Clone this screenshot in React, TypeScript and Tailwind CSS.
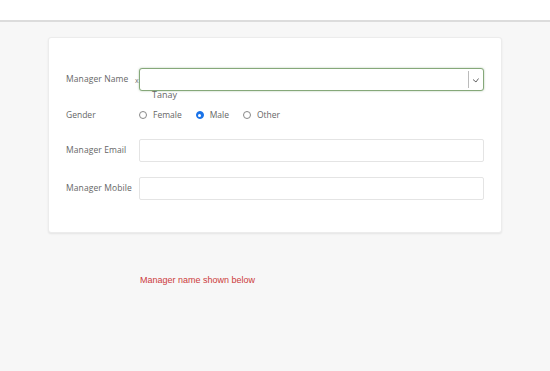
import { useState } from 'react'

const labelFont = { fontFamily: '"Open Sans", "Noto Sans", sans-serif' }

export default function App() {
  const [gender, setGender] = useState('male')

  return (
    <div className="min-h-[371px] w-[550px] bg-[#f7f7f7]" style={labelFont}>
      <header className="h-[22px] bg-white border-b-2 border-[#dcdcdc]" />

      <div className="pl-[48px] pt-[15px]">
        <div className="w-[454px] bg-white border border-[#ececec] rounded-[3px] shadow-[0_1px_2px_rgba(0,0,0,0.08)] pl-[17px] pr-[17px] pt-[30px] pb-[32px]">
          {/* manager name */}
          <div className="flex items-center h-[23px]">
            <label className="w-[73px] text-[8.5px] tracking-[0.1px] text-[#666]">Manager Name</label>
            <div className="relative flex-1 h-[23px]">
              <span className="absolute left-[-4px] top-[9px] text-[7px] leading-none text-[#777]">x</span>
              <div className="flex h-full items-center rounded-[3px] border border-[#86a87a] bg-white shadow-[0_0_2px_rgba(90,140,80,0.5)]">
                <input className="flex-1 h-full bg-transparent outline-none px-2 text-[9px]" />
                <div className="h-[17px] w-px bg-[#bbb]" />
                <svg width="12" height="12" viewBox="0 0 12 12" className="mx-[1px]">
                  <path d="M3 5.5 L6 8 L8.5 4.5" fill="none" stroke="#666" strokeWidth="1" />
                </svg>
              </div>
            </div>
          </div>
          <div className="pl-[86px] -mt-[1px] h-[10px] text-[9px] leading-[10px] text-[#666]">Tanay</div>

          {/* gender */}
          <div className="flex items-center h-[14px] mt-[8px]">
            <label className="w-[73px] text-[8.5px] text-[#666]">Gender</label>
            <div className="flex items-center text-[8.5px] text-[#666]">
              <Radio checked={gender === 'female'} onClick={() => setGender('female')} label="Female" />
              <Radio checked={gender === 'male'} onClick={() => setGender('male')} label="Male" />
              <Radio checked={gender === 'other'} onClick={() => setGender('other')} label="Other" />
            </div>
          </div>

          {/* email */}
          <div className="flex items-center h-[23px] mt-[17px]">
            <label className="w-[73px] text-[8.5px] tracking-[0.1px] text-[#666]">Manager Email</label>
            <input className="flex-1 h-full rounded-[2px] border border-[#e4e4e4] outline-none px-2 text-[9px]" />
          </div>

          {/* mobile */}
          <div className="flex items-center h-[23px] mt-[15px]">
            <label className="w-[73px] text-[8.5px] tracking-[0.1px] text-[#666]">Manager Mobile</label>
            <input className="flex-1 h-full rounded-[2px] border border-[#e4e4e4] outline-none px-2 text-[9px]" />
          </div>
        </div>
      </div>

      <p
        className="pl-[140px] mt-[41px] text-[9px] text-[#cc3a3c]"
        style={{ fontFamily: '"Liberation Sans", Arial, sans-serif' }}
      >
        Manager name shown below
      </p>
    </div>
  )
}

function Radio({ checked, onClick, label }: { checked: boolean; onClick: () => void; label: string }) {
  return (
    <button onClick={onClick} className="flex items-center mr-[14px] cursor-pointer">
      {checked ? (
        <span className="w-[8px] h-[8px] rounded-full bg-[#1a73e8] border border-[#1a73e8] flex items-center justify-center">
          <span className="w-[3px] h-[3px] rounded-full bg-white" />
        </span>
      ) : (
        <span className="w-[8px] h-[8px] rounded-full border border-[#888] bg-white" />
      )}
      <span className="ml-[6px]">{label}</span>
    </button>
  )
}
